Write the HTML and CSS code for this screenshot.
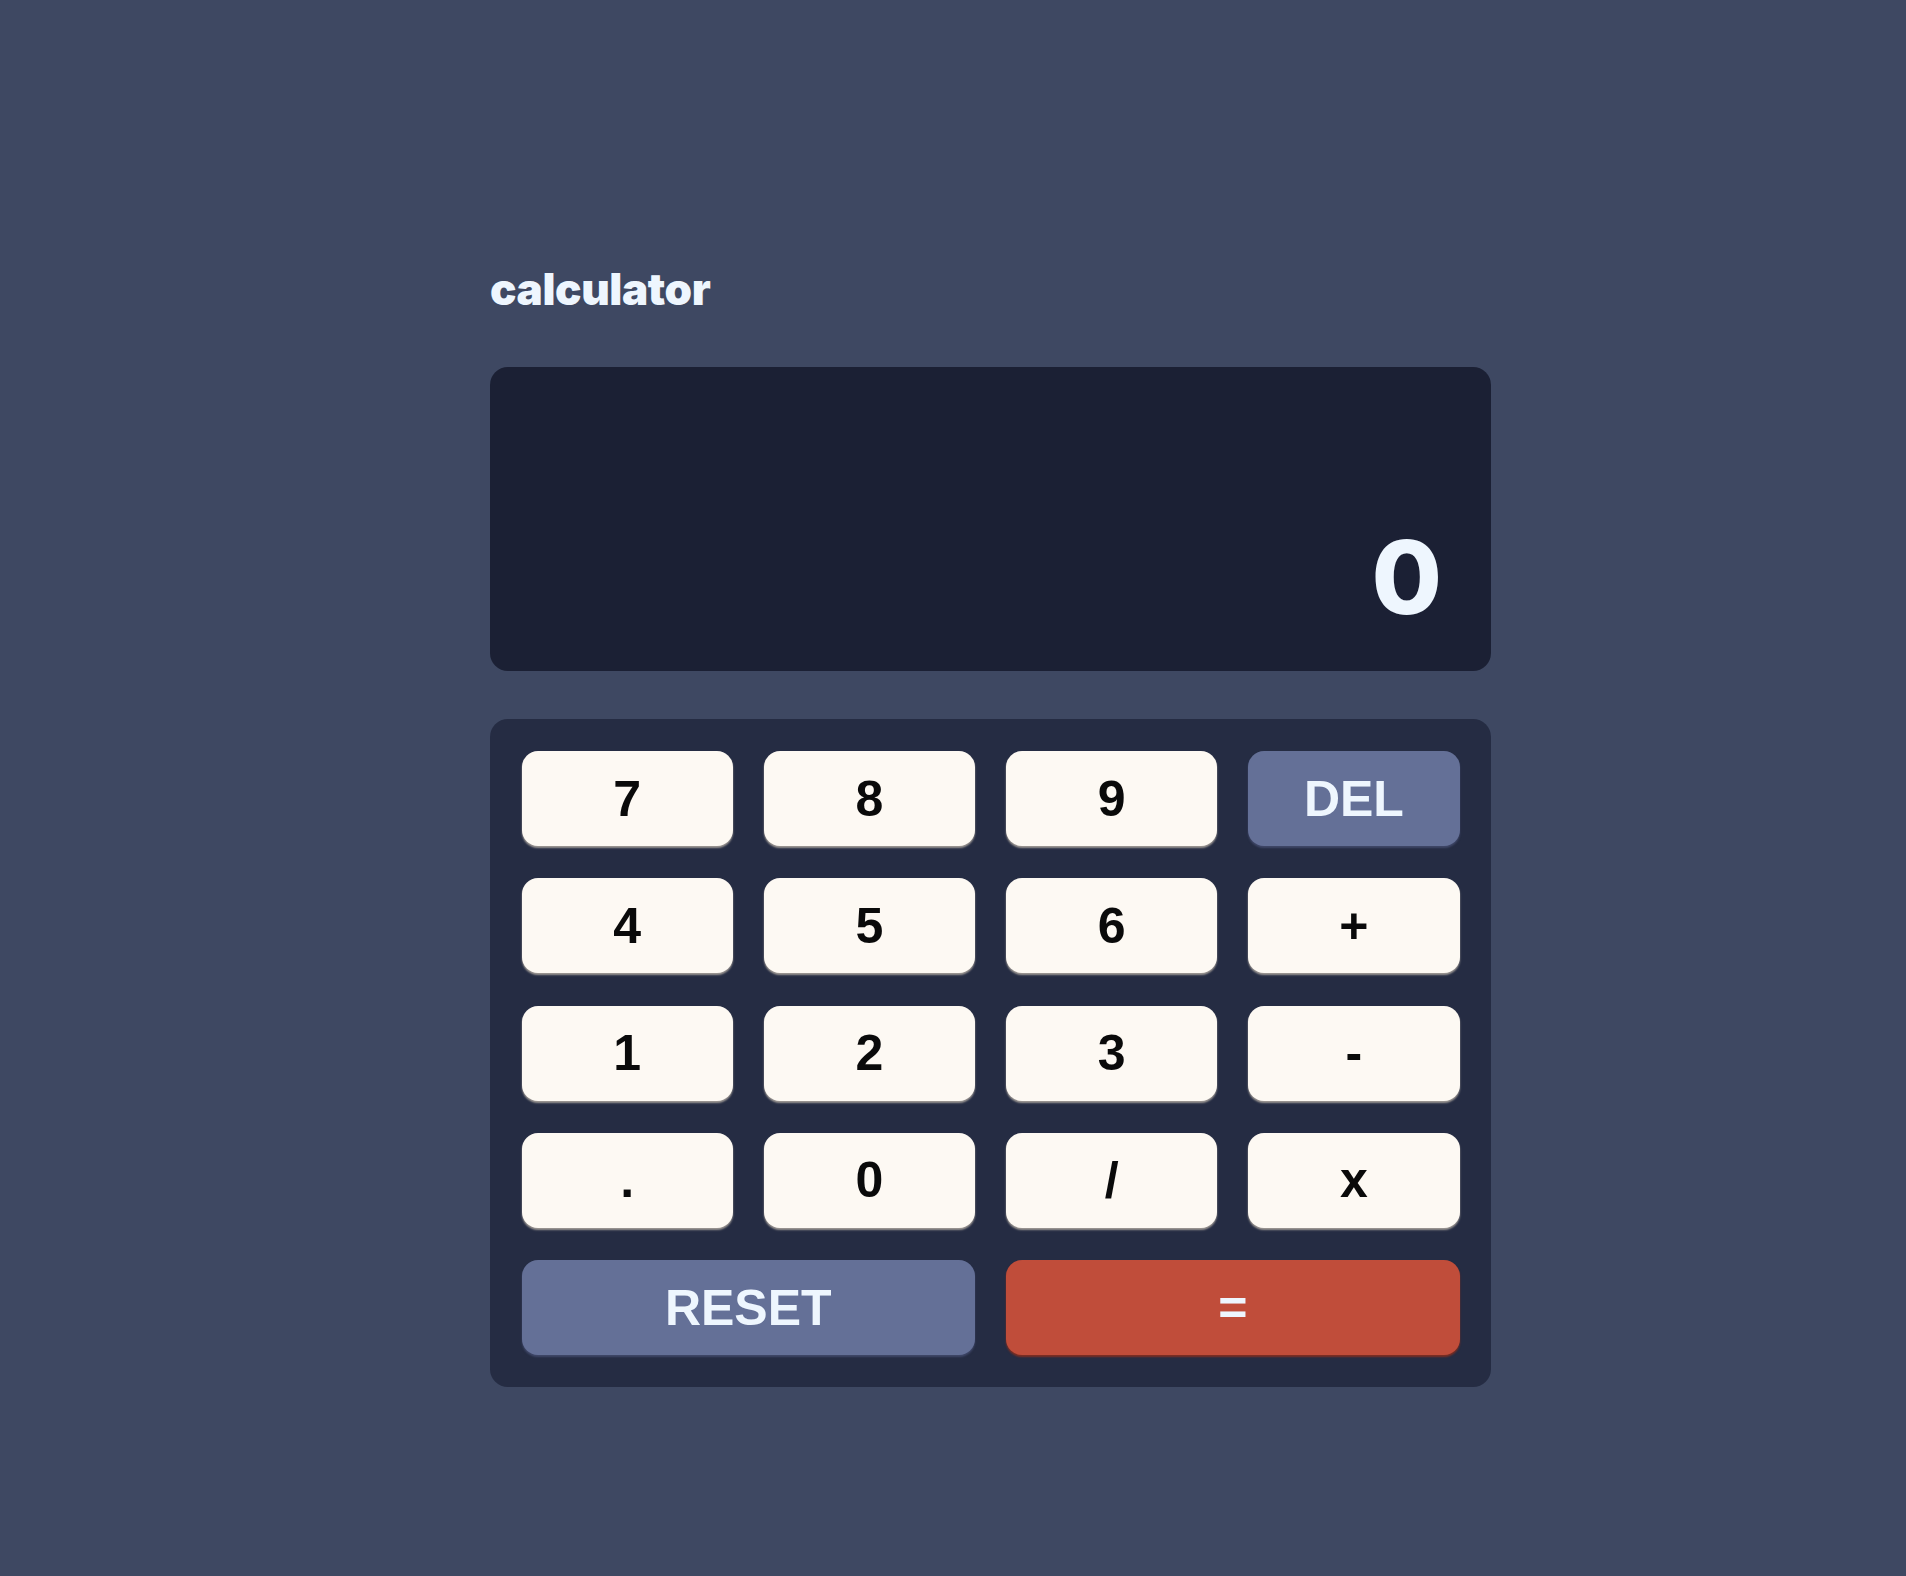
FILE: index.html
```html
<!DOCTYPE html>
<html lang="en">
<head>
<meta charset="utf-8">
<title>calculator</title>
<link rel="stylesheet" href="styles.css">
</head>
<body>
<main class="calc">
  <h1 class="title">calculator</h1>
  <div class="screen"><span class="value">0</span></div>
  <div class="keypad">
    <button class="key">7</button>
    <button class="key">8</button>
    <button class="key">9</button>
    <button class="key key-alt">DEL</button>
    <button class="key">4</button>
    <button class="key">5</button>
    <button class="key">6</button>
    <button class="key">+</button>
    <button class="key">1</button>
    <button class="key">2</button>
    <button class="key">3</button>
    <button class="key">-</button>
    <button class="key">.</button>
    <button class="key">0</button>
    <button class="key">/</button>
    <button class="key">x</button>
    <button class="key key-alt key-wide">RESET</button>
    <button class="key key-eq key-wide">=</button>
  </div>
</main>
</body>
</html>
```
FILE: styles.css
```css
html, body {
  margin: 0;
  padding: 0;
}
body {
  background: #3e4862;
  min-height: 1576px;
  font-family: "Liberation Sans", Arial, sans-serif;
}
.calc {
  width: 1001px;
  margin-left: 490px;
  padding-top: 267px;
  display: flex;
  flex-direction: column;
}
.title {
  margin: 0 0 56px 0;
  font-family: Inter, "Open Sans", sans-serif;
  font-weight: 900;
  font-size: 44px;
  line-height: 44px;
  height: 44px;
  color: #eef6fe;
  letter-spacing: -0.4px;
}
.screen {
  height: 304px;
  box-sizing: border-box;
  background: #1b2034;
  border-radius: 18px;
  display: flex;
  justify-content: flex-end;
  align-items: flex-end;
  padding: 0 49px 43px 0;
}
.value {
  font-family: Inter, "Open Sans", sans-serif;
  font-weight: 800;
  font-size: 102px;
  line-height: 102px;
  color: #eef6fe;
}
.keypad {
  margin-top: 48px;
  background: #252c43;
  border-radius: 18px;
  padding: 32px 31.5px 31px;
  display: grid;
  grid-template-columns: repeat(4, 1fr);
  grid-auto-rows: 96px;
  gap: 31.25px 31px;
}
.key {
  border: none;
  margin: 0;
  padding: 0;
  height: 95px;
  border-radius: 16px;
  background: #fdf9f3;
  box-shadow: 0 2px 2px #9d9894;
  font-family: "Liberation Sans", Arial, sans-serif;
  font-weight: 700;
  font-size: 50px;
  color: #0a0a0a;
  display: flex;
  align-items: center;
  justify-content: center;
}
.key-alt {
  background: #647097;
  color: #eef6fe;
  box-shadow: 0 2px 2px #3f4768;
}
.key-eq {
  background: #c04d3a;
  color: #eef6fe;
  box-shadow: 0 2px 2px #7e2e22;
}
.key-wide {
  grid-column: span 2;
}
```
